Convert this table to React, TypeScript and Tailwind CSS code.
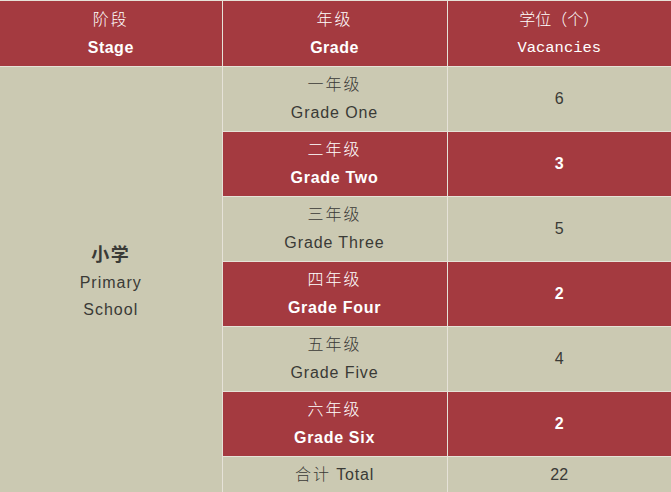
const sans = "font-['Liberation_Sans','Noto_Sans_CJK_SC',sans-serif]"

const rows = [
  { cn: "一年级", en: "Grade One", n: "6", red: false },
  { cn: "二年级", en: "Grade Two", n: "3", red: true },
  { cn: "三年级", en: "Grade Three", n: "5", red: false },
  { cn: "四年级", en: "Grade Four", n: "2", red: true },
  { cn: "五年级", en: "Grade Five", n: "4", red: false },
  { cn: "六年级", en: "Grade Six", n: "2", red: true },
]

export default function App() {
  return (
    <div className={`w-[671px] h-[492px] overflow-hidden bg-[#cbc9b2] ${sans}`}>
      <table className="w-[671px] table-fixed border-collapse text-center text-[16px] leading-[28px]">
        <colgroup>
          <col className="w-[222px]" />
          <col className="w-[225px]" />
          <col className="w-[224px]" />
        </colgroup>
        <tbody>
          <tr className="h-[66px] bg-[#a43a40] text-white">
            <td className="border-t border-r border-[#e6e2d8] p-0 align-middle">
              <div className="font-light tracking-[2px]">阶段</div>
              <div className="font-bold tracking-[0.5px]">Stage</div>
            </td>
            <td className="border-t border-r border-[#e6e2d8] p-0 align-middle">
              <div className="font-light tracking-[2px]">年级</div>
              <div className="font-bold tracking-[0.5px]">Grade</div>
            </td>
            <td className="border-t border-[#e6e2d8] p-0 align-middle">
              <div className="font-light">学位（个）</div>
              <div className="font-['Liberation_Mono',monospace] text-[15.5px]">Vacancies</div>
            </td>
          </tr>
          {rows.map((r, i) => (
            <tr key={r.en} className="h-[65px]">
              {i === 0 && (
                <td rowSpan={7} className="border-t border-r border-[#e6e2d8] p-0 align-middle bg-[#cbc9b2] text-[#3a3a36]">
                  <div className="font-bold text-[18px] tracking-[1.5px] pt-[4px]">小学</div>
                  <div className="tracking-[1px]">Primary</div>
                  <div className="leading-[26px] tracking-[1px]">School</div>
                </td>
              )}
              <td
                className={`border-t border-r border-[#e6e2d8] p-0 align-middle ${
                  r.red ? "bg-[#a43a40] text-white" : "bg-[#cbc9b2] text-[#3a3a36]"
                }`}
              >
                <div className="font-light tracking-[2px]">{r.cn}</div>
                <div className={r.red ? "font-bold tracking-[0.7px]" : "tracking-[0.9px]"}>{r.en}</div>
              </td>
              <td
                className={`border-t border-[#e6e2d8] p-0 align-middle ${
                  r.red ? "bg-[#a43a40] text-white font-bold" : "bg-[#cbc9b2] text-[#3a3a36]"
                }`}
              >
                {r.n}
              </td>
            </tr>
          ))}
          <tr className="h-[36px] text-[#3a3a36]">
            <td className="border-t border-r border-[#e6e2d8] p-0 align-middle tracking-[0.8px]">
              <span className="font-light tracking-[2px]">合计</span> Total
            </td>
            <td className="border-t border-[#e6e2d8] p-0 align-middle">22</td>
          </tr>
        </tbody>
      </table>
    </div>
  )
}
